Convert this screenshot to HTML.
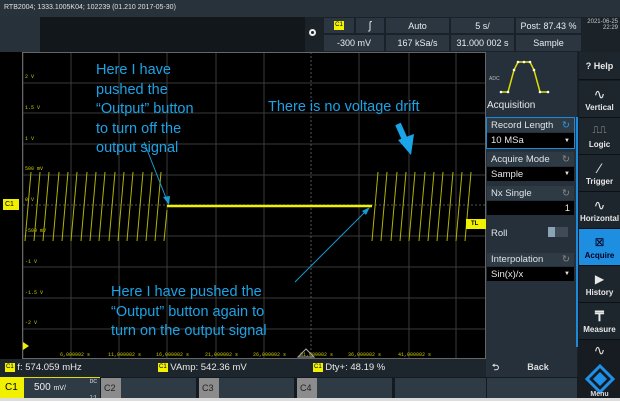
<!DOCTYPE html>
<html><head><meta charset="utf-8"><style>
*{margin:0;padding:0;box-sizing:border-box}
body{width:620px;height:401px;background:#fff;font-family:"Liberation Sans",sans-serif;position:relative;overflow:hidden}
.a{position:absolute}
.t{color:#e8ecef;font-size:9px;display:flex;align-items:center;justify-content:center}
.cell{background:#2c3640;border:1px solid #1a2128}
.ann{color:#1ca3e6;font-size:14.5px;line-height:19.5px}
.lbl{background:#2e3a44;color:#dfe4e8;font-size:9.5px;padding-left:4px;display:flex;align-items:center}
.dd{background:#000;color:#e6e6e6;font-size:9.5px;padding-left:4px;display:flex;align-items:center}
.sb{background:#1e262d;color:#e8e8e8;font-size:8px;font-weight:bold;text-align:center;border-bottom:1px solid #0c1014}
.c1{background:#f2f200;color:#000;font-size:6px;display:inline-block;padding:0 1px;line-height:9px;vertical-align:middle}
</style></head><body>
<div class="a" style="left:0;top:0;width:620px;height:401px;background:#1b2228"></div>
<div class="a" style="left:0;top:0;width:620px;height:17px;background:#27323b;color:#e0e0e0;font-size:7px;padding:4px 4px;line-height:8px">RTB2004; 1333.1005K04; 102239 (01.210 2017-05-30)</div>
<div class="a" style="left:0;top:17px;width:40px;height:35px;background:#27313a"></div>
<div class="a" style="left:40px;top:17px;width:265px;height:35px;background:#12171b"></div>
<div class="a" style="left:309px;top:29px;width:7px;height:7px;border:2px solid #eee;border-radius:50%"></div>
<div class="a cell t" style="left:323px;top:17px;width:32px;height:17px"><span class="c1">C1</span></div>
<div class="a cell t" style="left:355px;top:17px;width:30px;height:17px;font-size:11px">ʃ</div>
<div class="a cell t" style="left:385px;top:17px;width:65px;height:17px">Auto</div>
<div class="a cell t" style="left:450px;top:17px;width:65px;height:17px">5 s/</div>
<div class="a cell t" style="left:515px;top:17px;width:67px;height:17px">Post: 87.43 %</div>
<div class="a cell t" style="left:323px;top:34px;width:62px;height:18px">-300 mV</div>
<div class="a cell t" style="left:385px;top:34px;width:65px;height:18px">167 kSa/s</div>
<div class="a cell t" style="left:450px;top:34px;width:65px;height:18px">31.000 002 s</div>
<div class="a cell t" style="left:515px;top:34px;width:67px;height:18px">Sample</div>
<div class="a" style="left:584px;top:19px;width:34px;color:#ccc;font-size:6px;text-align:right;line-height:6px">2021-06-25<br>22:29</div>
<div class="a" style="left:0;top:52px;width:486px;height:307px;background:#000"></div>
<svg class="a" style="left:0;top:52px" width="486" height="308">
<g stroke="#3a3a3a" stroke-width="1">
<path d="M23 0V306M71 0V306M119 0V306M167 0V306M216 0V306M264 0V306M359 0V306M409 0V306M456 0V306"/>
<path d="M23 31H486M23 61H486M23 92H486M23 123H486M23 184H486M23 215H486M23 246H486M23 277H486"/>
</g>
<path d="M311 0V306M23 153H486" stroke="#555" stroke-dasharray="2 2"/>
<rect x="22.5" y="0.5" width="463" height="306" fill="none" stroke="#666"/>
<g fill="#c8c800" font-size="5" font-family="Liberation Mono">
<text x="25" y="26">2 V</text><text x="25" y="57">1.5 V</text><text x="25" y="88">1 V</text><text x="25" y="118">500 mV</text><text x="25" y="149">0 V</text><text x="25" y="180">-500 mV</text><text x="25" y="211">-1 V</text><text x="25" y="242">-1.5 V</text><text x="25" y="272">-2 V</text>
<text x="60" y="304">6,000002 s</text><text x="108" y="304">11,000002 s</text><text x="156" y="304">16,000002 s</text><text x="205" y="304">21,000002 s</text><text x="253" y="304">26,000002 s</text><text x="300" y="304">31,000002 s</text><text x="348" y="304">36,000002 s</text><text x="398" y="304">41,000002 s</text>
</g>
<path d="M298 305L306 297L314 305Z" fill="none" stroke="#aaa"/>
<path d="M23 290L29 294L23 298Z" fill="#ee0"/>
<path d="M25 189L31 120M34 189L40 120M43 189L49 120M53 189L59 120M62 189L68 120M71 189L77 120M81 189L87 120M90 189L96 120M99 189L105 120M109 189L115 120M118 189L124 120M127 189L133 120M137 189L143 120M146 189L152 120M155 189L161 120M164 189L167 158M372 189L378 120M381 189L387 120M391 189L397 120M400 189L406 120M409 189L415 120M419 189L425 120M428 189L434 120M437 189L443 120M447 189L453 120M456 189L462 120M465 189L471 120" stroke="#b4b400" stroke-width="1" fill="none"/>
<path d="M167 154H372" stroke="#f0f000" stroke-width="2.5"/>
<path d="M144 90L168 151" stroke="#1a9ad0" stroke-width="1"/><path d="M163 145L169 153L170 144Z" fill="#1a9ad0"/>
<path d="M295 230L368 157" stroke="#1a9ad0" stroke-width="1"/><path d="M362 159L370 155L366 163Z" fill="#1a9ad0"/>
<path d="M398 72L406 90" stroke="#1aa5e8" stroke-width="6"/><path d="M398 88L414 82L411 103Z" fill="#1aa5e8"/>
</svg>
<div class="a" style="left:3px;top:199px;width:16px;height:11px;background:#f0f000;font-size:7px;line-height:11px;padding-left:2px">C1</div>
<div class="a" style="left:466px;top:219px;width:20px;height:10px;background:#f0f000;font-size:6px;line-height:10px;padding-left:5px;font-weight:bold">TL</div>
<div class="a ann" style="left:96px;top:61px">Here I have<br>pushed the<br>“Output” button<br>to turn off the<br>output signal</div>
<div class="a ann" style="left:268px;top:98px">There is no voltage drift</div>
<div class="a ann" style="left:111px;top:283px">Here I have pushed the<br>“Output” button again to<br>turn on the output signal</div>
<div class="a" style="left:486px;top:52px;width:91px;height:307px;background:#25303a"></div>
<svg class="a" style="left:486px;top:52px" width="91" height="50"><path d="M15 40H22L28 18L32 10H44L48 18L54 40H62" stroke="#dede00" stroke-width="1.5" fill="none"/><g fill="#fff"><circle cx="15" cy="40" r="1.3"/><circle cx="22" cy="40" r="1.3"/><circle cx="28" cy="18" r="1.3"/><circle cx="32" cy="10" r="1.3"/><circle cx="38" cy="10" r="1.3"/><circle cx="44" cy="10" r="1.3"/><circle cx="48" cy="18" r="1.3"/><circle cx="54" cy="40" r="1.3"/><circle cx="62" cy="40" r="1.3"/></g><text x="3" y="28" fill="#bbb" font-size="5">ADC</text></svg>
<div class="a" style="left:487px;top:100px;color:#e8e8e8;font-size:10px">Acquisition</div>
<div class="a" style="left:486px;top:117px;width:89px;height:32px;border:1px solid #1c8ad8"></div>
<div class="a lbl" style="left:487px;top:118px;width:87px;height:14px">Record Length<span style="margin-left:auto;margin-right:4px;color:#2a9ae8">↻</span></div>
<div class="a dd" style="left:487px;top:133px;width:87px;height:15px">10 MSa<span style="margin-left:auto;margin-right:4px;font-size:6px">▼</span></div>
<div class="a lbl" style="left:487px;top:152px;width:87px;height:14px">Acquire Mode<span style="margin-left:auto;margin-right:4px;color:#888">↻</span></div>
<div class="a dd" style="left:487px;top:167px;width:87px;height:14px">Sample<span style="margin-left:auto;margin-right:4px;font-size:6px">▼</span></div>
<div class="a lbl" style="left:487px;top:186px;width:87px;height:14px">Nx Single<span style="margin-left:auto;margin-right:4px;color:#888">↻</span></div>
<div class="a dd" style="left:487px;top:201px;width:87px;height:14px;justify-content:flex-end;padding-right:4px">1</div>
<div class="a lbl" style="left:487px;top:224px;width:87px;height:18px;background:#25303a">Roll</div>
<div class="a" style="left:548px;top:227px;width:20px;height:10px;background:#3e4b56"><div style="width:7px;height:10px;background:#8aa4b6"></div></div>
<div class="a lbl" style="left:487px;top:253px;width:87px;height:13px">Interpolation<span style="margin-left:auto;margin-right:4px;color:#888">↻</span></div>
<div class="a dd" style="left:487px;top:267px;width:87px;height:14px">Sin(x)/x<span style="margin-left:auto;margin-right:4px;font-size:6px">▼</span></div>
<div class="a" style="left:576px;top:117px;width:2px;height:230px;background:#1c8ad8"></div>
<div class="a" style="left:486px;top:355px;width:91px;height:24px;background:#25303a;color:#ddd;font-size:9px;font-weight:bold;line-height:24px"><span style="margin-left:6px">⮌</span><span style="margin-left:28px">Back</span></div>
<div class="a" style="left:578px;top:52px;width:42px;height:346px;background:#161c21"></div>
<div class="a sb" style="left:579px;top:52px;width:41px;height:28px;font-size:9px;line-height:28px">? Help</div>
<div class="a sb" style="left:579px;top:81px;width:41px;height:37px;padding-top:4px"><div style="font-size:14px;font-weight:normal;line-height:18px">∿</div>Vertical</div>
<div class="a sb" style="left:579px;top:118px;width:41px;height:37px;padding-top:4px"><div style="font-size:10px;font-weight:normal;line-height:18px;color:#aaa">⎍⎍</div>Logic</div>
<div class="a sb" style="left:579px;top:155px;width:41px;height:37px;padding-top:4px"><div style="font-size:14px;font-weight:normal;line-height:18px">⁄</div>Trigger</div>
<div class="a sb" style="left:579px;top:192px;width:41px;height:37px;padding-top:4px"><div style="font-size:14px;font-weight:normal;line-height:18px">∿</div>Horizontal</div>
<div class="a sb" style="left:579px;top:229px;width:41px;height:37px;padding-top:4px;background:#1e8fe0;color:#002"><div style="font-size:12px;font-weight:normal;line-height:18px">⊠</div>Acquire</div>
<div class="a sb" style="left:579px;top:266px;width:41px;height:37px;padding-top:4px"><div style="font-size:12px;font-weight:normal;line-height:18px">▶</div>History</div>
<div class="a sb" style="left:579px;top:303px;width:41px;height:37px;padding-top:4px"><div style="font-size:14px;line-height:18px">₸</div>Measure</div>
<div class="a" style="left:579px;top:342px;width:41px;color:#ddd;font-size:14px;text-align:center">∿</div>
<svg class="a" style="left:585px;top:364px" width="30" height="30"><path d="M15 2L28 15L15 28L2 15Z" fill="none" stroke="#1e90e8" stroke-width="3"/><path d="M15 8L22 15L15 22L8 15Z" fill="#1e90e8"/></svg>
<div class="a" style="left:579px;top:391px;width:41px;color:#ddd;font-size:7px;font-weight:bold;text-align:center">Menu</div>
<div class="a" style="left:0;top:359px;width:486px;height:18px;background:#1e262d;color:#e8e8e8;font-size:9.5px;line-height:18px">
<span class="a" style="left:5px"><span class="c1">C1</span> f: 574.059 mHz</span>
<span class="a" style="left:158px"><span class="c1">C1</span> VAmp: 542.36 mV</span>
<span class="a" style="left:313px"><span class="c1">C1</span> Dty+: 48.19 %</span></div>
<div class="a" style="left:0;top:377px;width:578px;height:21px;background:#141a1f"></div>
<div class="a" style="left:0;top:377px;width:24px;height:21px;background:#f0f000;font-size:10px;line-height:21px;padding-left:5px">C1</div>
<div class="a" style="left:24px;top:377px;width:76px;height:21px;background:#2e3a44;border-top:1px solid #e0e000;color:#eee;font-size:10px;line-height:20px;padding-left:10px">500 <span style="font-size:7px">mV/</span><span style="position:absolute;right:3px;top:0;font-size:5px;line-height:8px">DC<br><br>1:1</span></div>
<div class="a" style="left:101px;top:378px;width:20px;height:20px;background:#8c8c8c;color:#222;font-size:9px;line-height:20px;padding-left:3px">C2</div>
<div class="a" style="left:121px;top:378px;width:75px;height:20px;background:#2e3a44"></div>
<div class="a" style="left:199px;top:378px;width:20px;height:20px;background:#8c8c8c;color:#222;font-size:9px;line-height:20px;padding-left:3px">C3</div>
<div class="a" style="left:219px;top:378px;width:75px;height:20px;background:#2e3a44"></div>
<div class="a" style="left:297px;top:378px;width:20px;height:20px;background:#8c8c8c;color:#222;font-size:9px;line-height:20px;padding-left:3px">C4</div>
<div class="a" style="left:317px;top:378px;width:75px;height:20px;background:#2e3a44"></div>
<div class="a" style="left:395px;top:378px;width:91px;height:20px;background:#2e3a44"></div>
<div class="a" style="left:487px;top:378px;width:90px;height:20px;background:#2e3a44"></div>
<div class="a" style="left:0;top:398px;width:620px;height:3px;background:#dcdcdc"></div>
</body></html>
